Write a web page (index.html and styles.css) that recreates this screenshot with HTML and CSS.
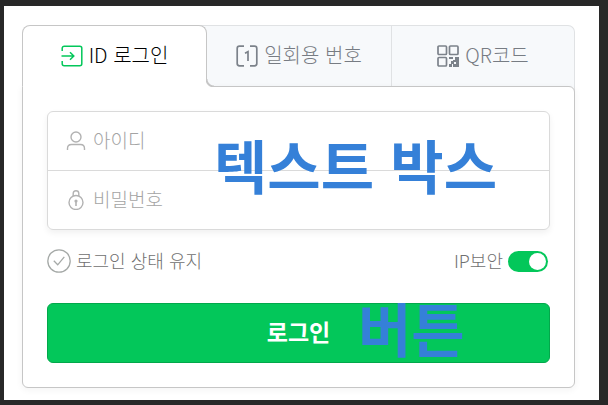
FILE: index.html
```html
<!DOCTYPE html>
<html lang="ko">
<head>
<meta charset="utf-8">
<meta name="viewport" content="width=device-width, initial-scale=1">
<title>로그인</title>
<link rel="stylesheet" href="styles.css">
</head>
<body>
<main class="page">
  <div class="tabs" role="tablist">
    <button class="tab tab-active" type="button" role="tab" aria-selected="true">
      <svg class="tab-icon" viewBox="0 0 22 22" fill="none" stroke="#03c75a" stroke-width="1.5" aria-hidden="true">
        <path d="M1.2 6V3.2a2 2 0 0 1 2-2h15.600a2 2 0 0 1 2 2v15.600a2 2 0 0 1-2 2H3.200a2 2 0 0 1-2-2V16"/>
        <path d="M0.500 11H12.500M9 7.300l3.800 3.700L9 14.700"/>
      </svg>
      <span class="tab-label">ID 로그인</span>
    </button>
    <button class="tab" type="button" role="tab" aria-selected="false">
      <svg class="tab-icon" viewBox="0 0 22 22" fill="none" stroke="#7c828a" stroke-width="1.7" aria-hidden="true">
        <path d="M8 1.200H3.500a2.300 2.300 0 0 0-2.300 2.300v15a2.300 2.300 0 0 0 2.300 2.300H8M14 1.200h4.500a2.300 2.300 0 0 1 2.300 2.300v15a2.300 2.300 0 0 1-2.300 2.300H14"/>
        <path d="M9 8.200l3-1.500V16"/>
      </svg>
      <span class="tab-label">일회용 번호</span>
    </button>
    <button class="tab tab-last" type="button" role="tab" aria-selected="false">
      <svg class="tab-icon" viewBox="0 0 22 22" fill="none" stroke="#7c828a" stroke-width="1.700" aria-hidden="true">
        <rect x="1" y="1" width="8.500" height="8.500" rx="1"/>
        <rect x="12.500" y="1" width="8.500" height="8.500" rx="1"/>
        <rect x="1" y="12.500" width="8.500" height="8.500" rx="1"/>
        <path fill="#7c828a" stroke="none" d="M12 12h4v2h-4zM18 12h4v10h-6v-3h3v-2h-3v-2h2zM12 19h3v3h-3zM14 16h3v3h-3z"/>
      </svg>
      <span class="tab-label">QR코드</span>
    </button>
  </div>
  <form class="card">
    <div class="fields">
      <label class="field">
        <svg class="field-icon" viewBox="0 0 20 20" fill="none" stroke="#b2b2b2" stroke-width="1.400" aria-hidden="true">
          <circle cx="10" cy="6" r="5"/>
          <path d="M1.500 19v-1.500c0-2.500 1.500-4 4-4h9c2.500 0 4 1.500 4 4V19"/>
        </svg>
        <input class="field-input" type="text" placeholder="아이디" aria-label="아이디">
      </label>
      <label class="field">
        <svg class="field-icon" viewBox="0 0 20 20" fill="none" stroke="#b2b2b2" stroke-width="1.400" aria-hidden="true">
          <circle cx="10" cy="12.500" r="7"/>
          <path d="M7.200 6V3.500a2.800 2.800 0 0 1 5.600 0V6"/>
          <circle cx="10" cy="11" r="0.900" fill="#b2b2b2"/>
          <path d="M10 11v5" stroke-width="1.600"/>
        </svg>
        <input class="field-input" type="password" placeholder="비밀번호" aria-label="비밀번호">
      </label>
      <strong class="note note-field">텍스트 박스</strong>
    </div>
    <div class="options">
      <label class="keep">
        <input class="keep-input" type="checkbox">
        <svg class="keep-icon" viewBox="0 0 24 24" fill="none" stroke="#a5a9a7" stroke-width="1.300" aria-hidden="true">
          <circle cx="12" cy="12" r="11.200"/>
          <path d="M6.800 11.800l3.900 4 6.600-8"/>
        </svg>
        <span class="option-label">로그인 상태 유지</span>
      </label>
      <label class="security">
        <span class="option-label">IP보안</span>
        <input class="switch" type="checkbox" role="switch" checked>
      </label>
    </div>
    <div class="submit">
      <button class="login" type="button">로그인</button>
      <strong class="note note-button">버튼</strong>
    </div>
  </form>
</main>
</body>
</html>
```
FILE: styles.css
```css
* {
  box-sizing: border-box;
}

body {
  margin: 0;
  padding: 6px 9px 5px 4px;
  background: #282828;
  font-family: "Noto Sans CJK KR", sans-serif;
  font-weight: 300;
}

button,
input {
  margin: 0;
  font: inherit;
}

.page {
  padding: 19px 24px 12px 18px;
  background: #fff;
}

.tabs {
  display: grid;
  grid-template-columns: 185fr 184fr 184fr;
  height: 61px;
}

.tab {
  position: relative;
  display: flex;
  align-items: center;
  justify-content: center;
  gap: 6px;
  padding: 0;
  border: 0 solid #e0e2e4;
  border-top-width: 1px;
  background: #f7f9fb;
  color: #777c83;
  font-size: 20px;
  line-height: 28px;
}

.tab-label {
  padding-bottom: 2px;
}

.tab-active {
  z-index: 2;
  border: 1px solid #c6c6c6;
  border-bottom: 0;
  border-radius: 8px 8px 0 0;
  background: #fff;
  color: #000;
}

.tab-active::before {
  content: "";
  position: absolute;
  right: -8px;
  bottom: -1px;
  width: 8px;
  height: 8px;
  background: radial-gradient(circle at 100% 0, #f7f9fb 6px, #c6c6c6 7px, #c6c6c6 8px, #fff 9px);
}

/* Covers the card's top edge below the selected tab. */
.tab-active::after {
  content: "";
  position: absolute;
  right: 0;
  bottom: -7px;
  left: 0;
  height: 8px;
  background: #fff;
}

/* Tint behind the rounded corner of the selected tab. */
.tab:nth-child(2)::before {
  content: "";
  position: absolute;
  top: -1px;
  left: -8px;
  width: 8px;
  height: 8px;
  border-top: 1px solid #e0e2e4;
  background: #f7f9fb;
}

.tab-last {
  border-right-width: 1px;
  border-left-width: 1px;
  border-top-right-radius: 7px;
}

.tab-last::after {
  content: "";
  position: absolute;
  right: -1px;
  bottom: -6px;
  width: 8px;
  height: 6px;
  border-right: 1px solid #e0e2e4;
  background: #f7f9fb;
}

.tab-icon {
  width: 22px;
  height: 22px;
}

.card {
  position: relative;
  z-index: 1;
  padding: 24px;
  border: 1px solid #c6c6c6;
  border-radius: 0 6px 6px 6px;
  background: #fff;
  box-shadow: 0 2px 6px 1px rgba(0, 0, 0, 0.04);
}

.fields {
  position: relative;
  border: 1px solid #dadada;
  border-radius: 6px;
  box-shadow: 0 3px 6px rgba(0, 0, 0, 0.06);
}

.field {
  display: flex;
  align-items: center;
  gap: 7px;
  height: 58px;
  padding: 0 18px;
}

.field + .field {
  height: 59px;
  border-top: 1px solid #dadada;
}

.field-icon {
  flex: none;
  width: 20px;
  height: 20px;
}

.field-input {
  flex: 1;
  min-width: 0;
  height: 40px;
  padding: 0 0 4px;
  border: 0;
  outline: 0;
  background: transparent;
  color: #222;
  font-size: 19px;
}

.field-input::placeholder {
  color: #a4a4a4;
  opacity: 1;
}

.options {
  display: flex;
  align-items: center;
  justify-content: space-between;
  height: 62px;
  padding-right: 2px;
  color: #707070;
  font-size: 18px;
  line-height: 26px;
}

.option-label {
  padding-bottom: 2px;
}

.keep,
.security {
  display: flex;
  align-items: center;
  gap: 5px;
}

.keep-input {
  position: absolute;
  opacity: 0;
}

.keep-icon {
  width: 24px;
  height: 24px;
}

.switch {
  appearance: none;
  display: flex;
  width: 40px;
  height: 21px;
  padding: 2px;
  border-radius: 11px;
  background: #ccc;
}

.switch::before {
  content: "";
  width: 17px;
  height: 17px;
  border-radius: 50%;
  background: #fff;
}

.switch:checked {
  justify-content: flex-end;
  background: #03c75a;
}

.submit {
  position: relative;
  margin-top: 11px;
}

.login {
  width: 100%;
  height: 60px;
  padding: 0 0 4px;
  border: 1px solid #02a84b;
  border-radius: 6px;
  background: #03c75a;
  color: #fff;
  font-size: 23px;
  font-weight: 700;
}

.note {
  position: absolute;
  color: #3580d8;
  font-size: 58px;
  font-weight: 700;
  line-height: 80px;
  white-space: nowrap;
  pointer-events: none;
}

.note-field {
  top: 12px;
  left: 166px;
}

.note-button {
  top: -16px;
  left: 311px;
}
```
